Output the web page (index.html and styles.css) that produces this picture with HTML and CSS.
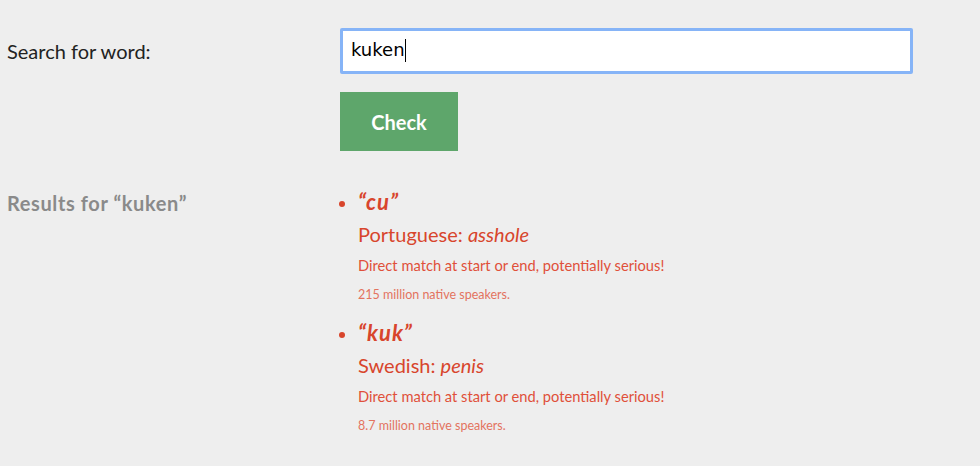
FILE: index.html
```html
<!DOCTYPE html>
<html>
<head>
<meta charset="utf-8">
<link rel="stylesheet" href="styles.css">
</head>
<body>
<main class="page">
  <div class="row row-search">
    <label class="label" for="word">Search for word:</label>
    <div class="field"><input id="word" class="input" type="text" value="kuken"><span class="caret"></span></div>
  </div>
  <div class="row row-button">
    <div></div>
    <div><button class="check">Check</button></div>
  </div>
  <div class="row row-results">
    <div class="results-label">Results for “kuken”</div>
    <ul class="results">
      <li class="result">
        <div class="match">“cu”</div>
        <div class="lang">Portuguese: <em>asshole</em></div>
        <div class="kind">Direct match at start or end, potentially serious!</div>
        <div class="speakers">215 million native speakers.</div>
      </li>
      <li class="result">
        <div class="match">“kuk”</div>
        <div class="lang">Swedish: <em>penis</em></div>
        <div class="kind">Direct match at start or end, potentially serious!</div>
        <div class="speakers">8.7 million native speakers.</div>
      </li>
    </ul>
  </div>
</main>
</body>
</html>
```
FILE: styles.css
```css
html, body {
  margin: 0;
  padding: 0;
  background: #eeeeee;
}
body {
  font-family: Lato, "Open Sans", sans-serif;
}
.page {
  padding: 28px 0 0 7px;
}
.row {
  display: grid;
  grid-template-columns: 333px 573px;
}
.row-search {
  align-items: center;
}
.label {
  font-size: 20px;
  color: #222;
}
.field {
  position: relative;
}
.input {
  box-sizing: border-box;
  width: 573px;
  height: 46px;
  margin: 0;
  border: 3px solid #86b4f7;
  border-radius: 2px;
  background: #fff;
  padding: 0 8px 4px 8px;
  font-family: "DejaVu Sans", sans-serif;
  font-size: 18px;
  color: #000;
  outline: none;
}
.caret {
  position: absolute;
  left: 65px;
  top: 11px;
  width: 1px;
  height: 23px;
  background: #000;
}
.row-button {
  margin-top: 18px;
}
.check {
  width: 118px;
  height: 59px;
  border: 0;
  margin: 0;
  background: #5ea66b;
  color: #fff;
  font-family: Lato, sans-serif;
  font-weight: bold;
  font-size: 20px;
  cursor: pointer;
}
.row-results {
  margin-top: 39px;
}
.results-label {
  font-weight: bold;
  font-size: 20px;
  letter-spacing: 0.6px;
  color: #8a8a8a;
  padding-top: 1px;
}
.results {
  margin: 0;
  padding: 0 0 0 18px;
  color: #d8452c;
}
.result {
  margin-bottom: 19px;
}
.result::marker {
  font-size: 18px;
}
.match {
  font-weight: bold;
  font-style: italic;
  font-size: 22px;
  letter-spacing: 1px;
  line-height: 24px;
}
.lang {
  font-size: 20px;
  margin-top: 8px;
  line-height: 24px;
}
.kind {
  font-size: 14.7px;
  margin-top: 10px;
  line-height: 18px;
  color: #e0503a;
}
.speakers {
  font-size: 12.5px;
  margin-top: 14px;
  line-height: 14px;
  color: #e3735f;
}
```
